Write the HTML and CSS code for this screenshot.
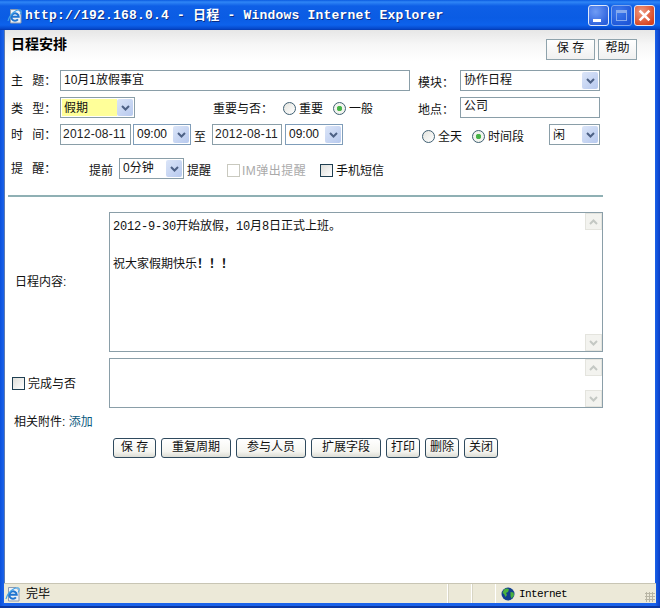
FILE: index.html
```html
<!DOCTYPE html>
<html lang="zh">
<head>
<meta charset="utf-8">
<title>日程</title>
<link rel="stylesheet" href="styles.css">
</head>
<body>
<svg class="defs" width="0" height="0" aria-hidden="true">
  <defs>
    <symbol id="ie" viewBox="0 0 16 16">
      <path d="M3.500 1.500h7.500l3 3v10.500H3.500z" fill="#eef1f6" stroke="#8d9bb0"/>
      <path d="M4.500 8.700h7.200A3.700 3.700 0 1 0 10.900 11.400" fill="none" stroke="#1f74d0" stroke-width="2"/>
      <path d="M1 13C2.500 6.500 9.500 .5 13.500 2c1.500.6.500 3-.5 4.500" fill="none" stroke="#3fa2ea" stroke-width="1.100"/>
    </symbol>
    <symbol id="arrow" viewBox="0 0 9 6">
      <path d="M1 1l3.500 3.500L8 1" fill="none" stroke="#4d6185" stroke-width="2"/>
    </symbol>
    <symbol id="up" viewBox="0 0 9 6">
      <path d="M1 5l3.500-3.500L8 5" fill="none" stroke="#c4c8c4" stroke-width="2"/>
    </symbol>
    <symbol id="down" viewBox="0 0 9 6">
      <path d="M1 1l3.500 3.500L8 1" fill="none" stroke="#c4c8c4" stroke-width="2"/>
    </symbol>
  </defs>
</svg>
<div class="window">
  <header class="titlebar">
    <svg class="title-icon"><use href="#ie"/></svg>
    <span class="title-text">http://192.168.0.4 - 日程 - Windows Internet Explorer</span>
    <div class="win-buttons">
      <div class="win-btn win-min"><span class="min-mark"></span></div>
      <div class="win-btn win-max"><span class="max-mark"></span></div>
      <div class="win-btn win-close">
        <svg class="close-mark" viewBox="0 0 12 12"><path d="M1.500 1.500l9 9M10.500 1.500l-9 9" stroke="#fff" stroke-width="2.400"/></svg>
      </div>
    </div>
  </header>

  <main class="client">
    <div class="head">
      <h1 class="heading">日程安排</h1>
      <div class="head-actions">
        <div class="flat-btn flat-save">保 存</div>
        <div class="flat-btn flat-help">帮助</div>
      </div>
    </div>

    <div class="form">
      <div class="row row-1">
        <span class="label">主 题：</span>
        <div class="field w350">10月1放假事宜</div>
        <span class="label-side ml8">模块：</span>
        <div class="select w140"><span class="select-value">协作日程</span><span class="select-btn"><svg class="arrow"><use href="#arrow"/></svg></span></div>
      </div>

      <div class="row row-2">
        <span class="label low">类 型：</span>
        <div class="select w75 select-yellow"><span class="select-value">假期</span><span class="select-btn"><svg class="arrow"><use href="#arrow"/></svg></span></div>
        <span class="label-imp low">重要与否：</span>
        <span class="opt low"><span class="radio"></span>重要</span>
        <span class="opt ml10 low"><span class="radio on"></span>一般</span>
        <span class="label-side ml45">地点：</span>
        <div class="field w140 field-top">公司</div>
      </div>

      <div class="row row-3">
        <span class="label">时 间：</span>
        <div class="field date w71">2012-08-11</div>
        <div class="select w58 ml2 time"><span class="select-value">09:00</span><span class="select-btn"><svg class="arrow"><use href="#arrow"/></svg></span></div>
        <span class="to">至</span>
        <div class="field date w70">2012-08-11</div>
        <div class="select w58 ml3 time"><span class="select-value">09:00</span><span class="select-btn"><svg class="arrow"><use href="#arrow"/></svg></span></div>
        <span class="opt ml79 lower"><span class="radio"></span>全天</span>
        <span class="opt ml10 lower"><span class="radio on"></span>时间段</span>
        <div class="select w51 ml25"><span class="select-value select-value-low">闲</span><span class="select-btn"><svg class="arrow"><use href="#arrow"/></svg></span></div>
      </div>

      <div class="row row-4">
        <span class="label">提 醒：</span>
        <span class="before">提前</span>
        <div class="select w65 ml6"><span class="select-value">0分钟</span><span class="select-btn"><svg class="arrow"><use href="#arrow"/></svg></span></div>
        <span class="remind">提醒</span>
        <span class="opt opt-disabled"><span class="check check-disabled"></span>IM弹出提醒</span>
        <span class="opt opt-sms"><span class="check"></span>手机短信</span>
      </div>

      <div class="rule"></div>

      <div class="area-row area-row-1">
        <span class="area-label">日程内容:</span>
        <div class="area area-tall">
          <div class="area-text">
            <p class="area-line"><span class="mono">2012-9-30</span>开始放假<span class="tc">，</span><span class="mono">10</span>月<span class="mono">8</span>日正式上班。</p>
            <p class="area-line area-gap">祝大家假期快乐<span class="tc bang">！！！</span></p>
          </div>
          <div class="scroll">
            <span class="scroll-btn"><svg class="arrow"><use href="#up"/></svg></span>
            <span class="scroll-btn"><svg class="arrow"><use href="#down"/></svg></span>
          </div>
        </div>
      </div>

      <div class="area-row area-row-2">
        <span class="area-label area-label-check"><span class="opt"><span class="check"></span>完成与否</span></span>
        <div class="area area-short">
          <div class="area-text"></div>
          <div class="scroll">
            <span class="scroll-btn"><svg class="arrow"><use href="#up"/></svg></span>
            <span class="scroll-btn"><svg class="arrow"><use href="#down"/></svg></span>
          </div>
        </div>
      </div>

      <div class="attach">相关附件: <a class="link" href="#">添加</a></div>

      <div class="actions">
        <div class="xp-btn w43">保 存</div>
        <div class="xp-btn w70">重复周期</div>
        <div class="xp-btn w70">参与人员</div>
        <div class="xp-btn w70">扩展字段</div>
        <div class="xp-btn w34">打印</div>
        <div class="xp-btn w34">删除</div>
        <div class="xp-btn w34">关闭</div>
      </div>
    </div>
  </main>

  <footer class="status">
    <div class="status-main">
      <svg class="status-icon"><use href="#ie"/></svg>
      <span>完毕</span>
    </div>
    <div class="status-cell"></div>
    <div class="status-cell"></div>
    <div class="status-zone">
      <svg class="globe" viewBox="0 0 14 14">
        <circle cx="7" cy="7" r="6.500" fill="#123f8f"/>
        <path d="M3 2.500c2-1.500 4-1 5 0l-1 2.500-2 1 1 2-1.500 2L3 7 1.500 6zM9.500 5l3 .5.500 3-2.500 3-1-2.500z" fill="#49b23e"/>
      </svg>
      <span class="zone-text">Internet</span>
      <span class="grip"></span>
    </div>
  </footer>
</div>
</body>
</html>
```

FILE: styles.css
```css
* { box-sizing: border-box; }
html, body { margin: 0; padding: 0; }
body {
  width: 660px;
  height: 608px;
  overflow: hidden;
  font: 12px/16px "Liberation Sans", "Noto Sans CJK SC", sans-serif;
  color: #111;
  background: #fff;
}
.defs { position: absolute; }
.window {
  width: 660px;
  height: 608px;
  display: flex;
  flex-direction: column;
  padding-bottom: 3px;
  background: linear-gradient(90deg, #0a50dc 0, #1a62ea 4px, #1a62ea 655px, #0a3fc8 660px);
  border-bottom: 2px solid #0b37a0;
}

/* title bar */
.titlebar {
  height: 30px;
  flex: none;
  display: flex;
  align-items: center;
  padding: 1px 5px 0 7px;
  background: linear-gradient(180deg, #0a5be0 0, #2f86f6 2px, #0e5fe6 6px, #0a5ce4 18px, #0d62ec 25px, #0546c8 29px, #0437a8 30px);
}
.title-icon { width: 16px; height: 16px; flex: none; }
.title-text {
  margin-left: 2px;
  font: bold 13px/16px "Liberation Mono", "Noto Sans CJK SC", monospace;
  letter-spacing: 0.2px;
  color: #fff;
  text-shadow: 1px 1px 0 #0b2f86;
  white-space: nowrap;
}
.win-buttons { margin-left: auto; display: flex; gap: 2px; }
.win-btn {
  width: 21px;
  height: 21px;
  border: 1px solid #dfe8fa;
  border-radius: 3px;
  display: flex;
  align-items: center;
  justify-content: center;
  background: radial-gradient(circle at 35% 30%, #6f9cf5, #2a5fdc 80%);
}
.win-max { background: radial-gradient(circle at 35% 30%, #3f7bee, #1e56d8 80%); border-color: #7ea6ee; }
.win-close { background: radial-gradient(circle at 35% 30%, #ee9a80, #d8431f 80%); }
.min-mark { width: 8px; height: 3px; background: #fff; margin: 9px 4px 0 0; }
.max-mark { width: 11px; height: 11px; border: 1px solid #86aaee; border-top-width: 3px; }
.close-mark { width: 13px; height: 13px; }

/* client */
.client {
  flex: 1;
  min-height: 0;
  margin: 0 5px 0 4px;
  background: #fff;
  border-left: 1px solid #5c7ab0;
}
.head {
  height: 32px;
  display: flex;
  padding: 9px 18px 0 7px;
  background: linear-gradient(180deg, #e6e6e6 0, #f6f6f6 14px, #fff 32px);
}
.heading {
  margin: -6px 0 0 -1px;
  font: bold 14px/20px "Noto Sans CJK SC", sans-serif;
  color: #000;
}
.head-actions { margin-left: auto; display: flex; gap: 3px; }
.flat-btn {
  height: 21px;
  border: 1px solid #8fa3ac;
  background: linear-gradient(180deg, #fff, #f0f0f0);
  text-align: center;
  line-height: 17px;
  color: #111;
}
.flat-save { width: 49px; }
.flat-help { width: 39px; }

.form { padding: 8px 0 0 3px; }
.row {
  display: flex;
  align-items: center;
  height: 21px;
  padding-left: 3px;
  white-space: nowrap;
}
.row-2, .row-3 { margin-top: 6px; }
.row-4 { margin-top: 13px; }
.label { width: 49px; flex: none; word-spacing: 6px; }
.label-side { width: 42px; flex: none; padding-top: 4px; }
.label-imp { margin-left: 78px; width: 70px; flex: none; }
.low { padding-top: 2px; }
.lower { padding-top: 4px; }
.ml2 { margin-left: 2px; }
.ml3 { margin-left: 3px; }
.ml6 { margin-left: 6px; }
.ml8 { margin-left: 8px; }
.ml10 { margin-left: 10px; }
.ml25 { margin-left: 25px; }
.ml45 { margin-left: 45px; }
.ml79 { margin-left: 79px; }
.w34 { width: 34px; }
.w43 { width: 43px; }
.w51 { width: 51px; }
.w58 { width: 58px; }
.w65 { width: 65px; }
.w70 { width: 70px; }
.w71 { width: 71px; }
.w75 { width: 75px; }
.w140 { width: 140px; }
.w350 { width: 350px; }

.field {
  height: 21px;
  flex: none;
  border: 1px solid #8a9ea8;
  padding: 0 3px;
  line-height: 19px;
  background: #fff;
}
.field-top { line-height: 17px; }
.date { padding: 0 2px; color: #222; letter-spacing: 0.25px; }
.select {
  height: 21px;
  flex: none;
  display: flex;
  border: 1px solid #8a9ea8;
  background: #fff;
  padding: 1px;
}
.select-value { flex: 1; line-height: 17px; padding-left: 2px; overflow: hidden; }
.select-value-low { line-height: 19px; }
.select-yellow .select-value { background: #ffff99; line-height: 19px; }
.time { border-color: #7f9db9; }
.select-btn {
  width: 16px;
  flex: none;
  display: flex;
  align-items: center;
  justify-content: center;
  background: linear-gradient(135deg, #dbe5f8, #b7c9ee);
  border-radius: 2px;
}
.arrow { width: 9px; height: 6px; display: block; }
.to { margin-left: 3px; width: 18px; flex: none; padding-top: 5px; }
.before { margin-left: 29px; width: 24px; flex: none; padding-top: 4px; }
.remind { margin-left: 3px; padding-top: 4px; }

.opt { display: inline-flex; align-items: center; gap: 3px; flex: none; }
.radio {
  width: 13px;
  height: 13px;
  flex: none;
  border: 1px solid #3f5f72;
  border-radius: 50%;
  background: linear-gradient(135deg, #e4e4de, #fff);
  display: inline-block;
}
.radio.on { background: radial-gradient(circle, #3fae3f 0, #4fb84f 2.5px, #f2f4ee 3px); }
.check {
  width: 13px;
  height: 13px;
  flex: none;
  border: 1px solid #1f3f52;
  background: linear-gradient(135deg, #dededa, #fff);
  display: inline-block;
}
.check-disabled { border-color: #c9c9bf; background: #fff; }
.opt-disabled { margin-left: 16px; width: 93px; gap: 2px; color: #aaa; padding-top: 4px; letter-spacing: 0.5px; }
.opt-sms { padding-top: 4px; }

.rule { width: 595px; height: 2px; margin-top: 16px; background: #8fb0b4; }

.area-row { display: flex; align-items: center; }
.area-row-1 { margin-top: 15px; }
.area-row-2 { margin-top: 6px; }
.area-label { width: 101px; flex: none; padding-left: 7px; }
.area-label-check { padding-left: 4px; padding-top: 4px; }
.area {
  width: 494px;
  display: flex;
  border: 1px solid #8a9ea8;
  background: #fff;
}
.area-tall { height: 140px; }
.area-short { height: 50px; }
.area-text { flex: 1; padding: 3px 3px; color: #111; }
.area-line { margin: 0; line-height: 18px; }
.area-gap { margin-top: 18px; }
.mono { font: 12px/18px "Liberation Mono", monospace; letter-spacing: -0.2px; }
.tc { font-family: "Noto Sans CJK TC", sans-serif; }
.bang { font-weight: bold; }
.scroll {
  width: 17px;
  flex: none;
  display: flex;
  flex-direction: column;
  justify-content: space-between;
}
.scroll-btn {
  height: 17px;
  display: flex;
  align-items: center;
  justify-content: center;
  background: #f3f3ef;
  border: 1px solid #e4e4de;
}

.attach { margin-top: 6px; padding-left: 6px; }
.link { color: #0b5a80; text-decoration: none; }
.actions { display: flex; gap: 5px; margin-top: 8px; padding-left: 105px; }
.xp-btn {
  height: 20px;
  flex: none;
  border: 1px solid #2f4a5e;
  border-radius: 3px;
  background: linear-gradient(180deg, #fff 0, #f5f5f0 70%, #dcdcd4 100%);
  text-align: center;
  line-height: 16px;
  color: #111;
}

/* status bar */
.status {
  height: 20px;
  flex: none;
  margin: 0 4px;
  display: flex;
  background: #ece9d8;
  border-top: 1px solid #c8c5b4;
}
.status-main {
  flex: 1;
  display: flex;
  align-items: center;
  gap: 5px;
  padding-left: 1px;
  color: #000;
}
.status-icon { width: 16px; height: 16px; flex: none; }
.status-cell { width: 24px; border-left: 1px solid #fff; box-shadow: inset 1px 0 0 #d8d5c4; }
.status-zone {
  width: 161px;
  display: flex;
  align-items: center;
  border-left: 1px solid #fff;
  padding-left: 5px;
}
.globe { width: 14px; height: 14px; flex: none; }
.zone-text {
  margin-left: 4px;
  font: 11px/14px "Liberation Mono", monospace;
  letter-spacing: -0.6px;
  color: #000;
}
.grip {
  width: 10px;
  height: 10px;
  margin: 6px 1px 0 auto;
  background: radial-gradient(circle, #b8b5a4 1px, transparent 1.2px) 0 0 / 3px 3px;
}
```
